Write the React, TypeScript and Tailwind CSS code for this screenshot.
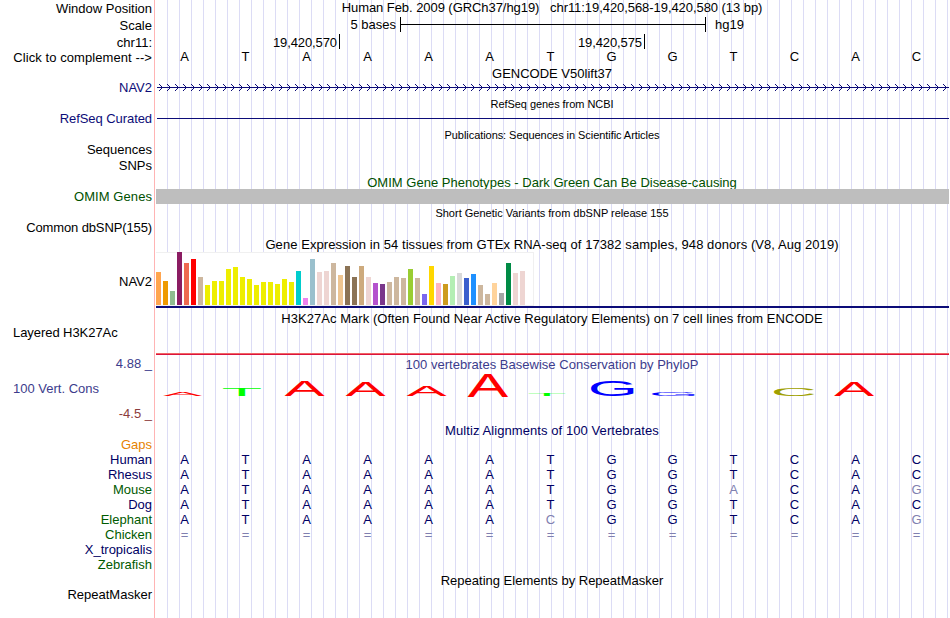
import React from 'react';

type RowProps = {
  h: string;
  label?: string;
  labelClass?: string;
  children?: React.ReactNode;
};

const BASES = 'ATAAAATGGTCAC';

const SPECIES = [
  { name: 'Human', color: 'text-[#000064]', seq: 'ATAAAATGGTCAC', faded: [] },
  { name: 'Rhesus', color: 'text-[#000064]', seq: 'ATAAAATGGTCAC', faded: [] },
  { name: 'Mouse', color: 'text-[#005a00]', seq: 'ATAAAATGGACAG', faded: [9, 12] },
  { name: 'Dog', color: 'text-[#000064]', seq: 'ATAAAATGGTCAC', faded: [] },
  { name: 'Elephant', color: 'text-[#005a00]', seq: 'ATAAAACGGTCAG', faded: [6, 12] },
  { name: 'Chicken', color: 'text-[#005a00]', seq: '=============', faded: [0, 1, 2, 3, 4, 5, 6, 7, 8, 9, 10, 11, 12] },
  { name: 'X_tropicalis', color: 'text-[#000064]', seq: '', faded: [] },
  { name: 'Zebrafish', color: 'text-[#005a00]', seq: '', faded: [] },
];

// [height, color] per GTEx tissue
const TISSUES: [number, string][] = [
  [33, '#ffa54f'], [24, '#ee9a00'], [14, '#8fbc8f'], [53, '#8b1c62'], [42, '#ee6a50'], [46, '#ff0000'],
  [28, '#cdb79e'], [20, '#eeee00'], [24, '#eeee00'], [24, '#eeee00'], [36, '#eeee00'], [38, '#eeee00'],
  [28, '#eeee00'], [26, '#eeee00'], [20, '#eeee00'], [23, '#eeee00'], [23, '#eeee00'], [21, '#eeee00'],
  [26, '#eeee00'], [23, '#eeee00'], [34, '#00cdcd'], [7, '#ee82ee'], [46, '#9ac0cd'], [33, '#eed5d2'],
  [34, '#eed5d2'], [42, '#cdb79e'], [30, '#eec591'], [39, '#8b7355'], [28, '#8b7355'], [39, '#cdaa7d'],
  [28, '#eed5d2'], [22, '#b452cd'], [21, '#7a378b'], [23, '#cdb79e'], [28, '#cdb79e'], [27, '#cdb79e'],
  [36, '#9acd32'], [27, '#cdb79e'], [11, '#7a67ee'], [39, '#ffd700'], [22, '#ffb6c1'], [21, '#cd9b1d'],
  [29, '#b4eeb4'], [32, '#d9d9d9'], [27, '#3a5fcd'], [31, '#1e90ff'], [20, '#cdb79e'], [11, '#cdb79e'],
  [22, '#ffd39b'], [12, '#a6a6a6'], [42, '#008b45'], [32, '#eed5d2'], [34, '#eed5d2'], [0, '#ff00ff'],
];

// left / right / bottom / top of each capital, in em
const GLYPHS: Record<string, { box: [number, number, number, number]; color: string }> = {
  A: { box: [0.002, 0.665, 0, 0.688], color: '#ff0000' },
  T: { box: [0.021, 0.59, 0, 0.688], color: '#00ff00' },
  G: { box: [0.05, 0.715, -0.01, 0.698], color: '#0000ff' },
  C: { box: [0.05, 0.687, -0.01, 0.698], color: '#a0a000' },
};

// letter, x, width, top, bottom inside the logo row
const LOGO: [string, number, number, number, number][] = [
  ['A', 9, 39, 21, 24.7],
  ['T', 69, 38, 18, 25],
  ['A', 130.5, 40, 10, 24.8],
  ['A', 191.7, 40, 11, 24.8],
  ['A', 252.7, 40, 15, 24.8],
  ['A', 313.5, 40.5, 3, 25.8],
  ['T', 374.5, 37, 23, 25],
  ['G', 437, 43, 9, 25],
  ['G', 498, 43, 21, 24.8],
  ['C', 620, 40.5, 17, 25],
  ['A', 680, 40, 11, 24.8],
];

const Row = ({ h, label, labelClass = '', children }: RowProps) => (
  <div className={`flex shrink-0 ${h}`}>
    <div className={`w-[154px] shrink-0 whitespace-pre pr-[2px] text-right ${labelClass}`}>{label}</div>
    <div className="w-[795px] shrink-0">{children}</div>
  </div>
);

const Title = ({ className = '', children }: { className?: string; children: string }) => (
  <div className={`whitespace-pre pl-px text-center ${className}`}>{children}</div>
);

const Letters = ({ seq, faded = [], className = '' }: { seq: string; faded?: number[]; className?: string }) => (
  <div className={`grid w-[793px] grid-cols-13 text-center ${className}`}>
    {seq.split('').map((c, i) => (
      <span key={i} className={faded.includes(i) ? 'text-[#8080b0]' : ''}>
        {c}
      </span>
    ))}
  </div>
);

const Arrows = () => (
  <svg width="793" height="7" className="mt-1 ml-[2px] block" shapeRendering="crispEdges">
    <rect x="1" y="3" width="792" height="1" fill="#0c0c78" />
    {Array.from({ length: 99 }, (_, i) => (
      <path
        key={i}
        d={`M${3 + i * 8} 0h1v1h1v1h1v1h1v1h-1v1h-1v1h-1v1h-1v-1h1v-1h1v-1h1v-1h-1v-1h-1v-1h-1z`}
        fill="#0c0c78"
      />
    ))}
  </svg>
);

const Logo = () => (
  <svg width="795" height="35" className="block overflow-visible">
    {LOGO.map(([c, x, w, top, bottom], i) => {
      const [l, r, b, t] = GLYPHS[c].box;
      const sx = w / ((r - l) * 100);
      const sy = (bottom - top) / ((t - b) * 100);
      return (
        <text
          key={i}
          fontSize="100"
          fill={GLYPHS[c].color}
          transform={`translate(${x - l * 100 * sx} ${bottom + b * 100 * sy}) scale(${sx} ${sy})`}
        >
          {c}
        </text>
      );
    })}
  </svg>
);

export default function App() {
  return (
    <div className="h-[618px] w-[950px] overflow-hidden bg-white font-['Liberation_Sans',Arial,sans-serif] text-[13px] leading-[15px] text-black">
      <div className="flex h-full w-[949px] flex-col bg-[linear-gradient(#ffb4b4,#ffb4b4),repeating-linear-gradient(90deg,#dcdcf5_0px,#dcdcf5_1px,transparent_1px,transparent_12px)] bg-[size:1px_100%,782px_100%] bg-[position:154px_0,167px_0] bg-no-repeat pt-px">
        <Row h="h-[16px]" label="Window Position">
          <Title className="-mt-px tracking-[-0.06px]">
            Human Feb. 2009 (GRCh37/hg19)   chr11:19,420,568-19,420,580 (13 bp)
          </Title>
        </Row>
        <Row h="h-[17px]" label="Scale" labelClass="pt-px">
          <div className="flex">
            <span className="w-[246px] pr-[4px] text-right">5 bases</span>
            <div className="flex h-[15px] w-[306px] items-center border-x border-black">
              <div className="h-px w-full bg-black" />
            </div>
            <span className="pl-[9px]">hg19</span>
          </div>
        </Row>
        <Row h="h-[16px]" label="chr11:" labelClass="pt-px">
          <div className="flex text-right tracking-[-0.1px]">
            <div className="h-[15px] w-[186px] border-r border-black pt-px pr-[2px]">19,420,570</div>
            <div className="h-[15px] w-[305px] border-r border-black pt-px pr-[2px]">19,420,575</div>
          </div>
        </Row>
        <Row h="h-[16px]" label="Click to complement -->" labelClass="tracking-[0.08px]">
          <Letters seq={BASES} className="-mt-px" />
        </Row>
        <Row h="h-[14px]">
          <Title>GENCODE V50lift37</Title>
        </Row>
        <Row h="h-[17px]" label="NAV2" labelClass="text-[#0c0c78]">
          <Arrows />
        </Row>
        <Row h="h-[14px]">
          <Title className="text-[11px] tracking-[-0.05px]">RefSeq genes from NCBI</Title>
        </Row>
        <Row h="h-[17px]" label="RefSeq Curated" labelClass="text-[#0c0c78] tracking-[-0.07px]">
          <div className="mt-[7px] ml-[3px] h-px bg-[#0c0c78]" />
        </Row>
        <Row h="h-[14px]">
          <Title className="text-[11px] tracking-[-0.06px]">Publications: Sequences in Scientific Articles</Title>
        </Row>
        <Row h="h-[16px]" label="Sequences" />
        <Row h="h-[17px]" label="SNPs" />
        <Row h="h-[14px]">
          <Title className="text-[#005000] tracking-[0.02px]">OMIM Gene Phenotypes - Dark Green Can Be Disease-causing</Title>
        </Row>
        <Row h="h-[17px]" label="OMIM Genes" labelClass="text-[#005000] tracking-[0.07px]">
          <div className="ml-[2px] h-[15px] bg-[#bebebe]" />
        </Row>
        <Row h="h-[14px]">
          <Title className="text-[11px]">Short Genetic Variants from dbSNP release 155</Title>
        </Row>
        <Row h="h-[17px]" label="Common dbSNP(155)" labelClass="tracking-[-0.12px]" />
        <Row h="h-[15px]">
          <Title className="tracking-[0.065px]">
            Gene Expression in 54 tissues from GTEx RNA-seq of 17382 samples, 948 donors (V8, Aug 2019)
          </Title>
        </Row>
        <Row h="h-[59px]" label="NAV2" labelClass="pt-[22px]">
          <div className="ml-[2px] flex h-[54px] w-[378px] items-end gap-[2px] border border-l-0 border-[#f0f0f0] bg-white">
            {TISSUES.map(([height, color], i) => (
              <div key={i} className="-mt-px w-[5px] shrink-0" style={{ height, backgroundColor: color }} />
            ))}
          </div>
          <div className="ml-[2px] h-[2px] bg-[#0c0c78]" />
        </Row>
        <Row h="h-[14px]">
          <Title className="tracking-[0.045px]">
            H3K27Ac Mark (Often Found Near Active Regulatory Elements) on 7 cell lines from ENCODE
          </Title>
        </Row>
        <Row h="h-[31px]" label="Layered H3K27Ac" labelClass="pl-[13px] !text-left tracking-[-0.06px]">
          <div className="mt-[28px] ml-[2px] h-[2px] border-t border-[#f06464] bg-[#dc143c]" />
        </Row>
        <Row h="h-[15px]" label="4.88 _" labelClass="text-[#3c3c8c]">
          <Title className="pt-px text-[#3c3c8c] tracking-[0.02px]">100 vertebrates Basewise Conservation by PhyloP</Title>
        </Row>
        <Row h="h-[35px]" label="100 Vert. Cons" labelClass="pl-[13px] pt-[10px] !text-left text-[#3c3c8c]">
          <Logo />
        </Row>
        <Row h="h-[17px]" label="-4.5 _" labelClass="text-[#8c3c3c]" />
        <Row h="h-[14px]">
          <Title className="text-[#000064] tracking-[0.08px]">Multiz Alignments of 100 Vertebrates</Title>
        </Row>
        <Row h="h-[15px]" label="Gaps" labelClass="text-[#e68200]" />
        {SPECIES.map((s) => (
          <Row key={s.name} h="h-[15px]" label={s.name} labelClass={s.color}>
            <Letters seq={s.seq} faded={s.faded} className="text-[#000064]" />
          </Row>
        ))}
        <Row h="h-[15px]">
          <Title className="pt-px">Repeating Elements by RepeatMasker</Title>
        </Row>
        <Row h="h-[15px]" label="RepeatMasker" />
      </div>
    </div>
  );
}
